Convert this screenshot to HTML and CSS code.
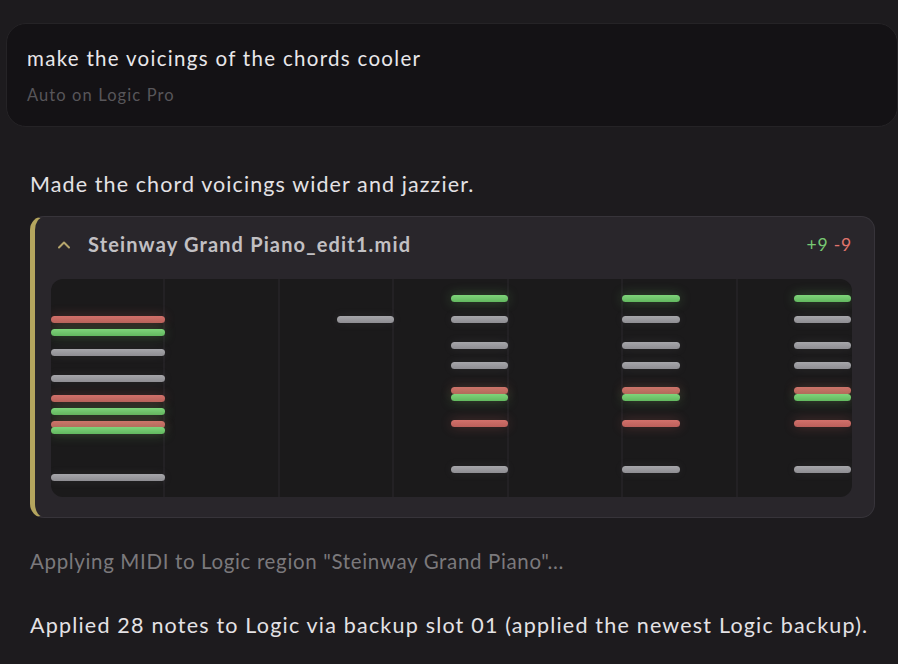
FILE: index.html
```html
<!DOCTYPE html>
<html lang="en">
<head>
<meta charset="utf-8">
<title>Chat</title>
<link rel="stylesheet" href="styles.css">
</head>
<body>
<main class="thread">
  <section class="prompt">
    <p class="prompt-text">make the voicings of the chords cooler</p>
    <p class="prompt-meta">Auto on Logic Pro</p>
  </section>

  <p class="reply">Made the chord voicings wider and jazzier.</p>

  <section class="midi-card">
    <header class="midi-head">
      <svg class="chev" width="14" height="9" viewBox="0 0 14 9" aria-hidden="true">
        <path d="M2 7.5 L7 2.5 L12 7.5" fill="none" stroke="currentColor" stroke-width="2" stroke-linecap="round" stroke-linejoin="round"/>
      </svg>
      <span class="midi-name">Steinway Grand Piano_edit1.mid</span>
      <span class="diff"><span class="add">+9</span> <span class="del">-9</span></span>
    </header>
    <div class="roll">
      <div class="grid">
        <span></span><span></span><span></span><span></span><span></span><span></span><span></span>
      </div>
      <!-- bar 1 -->
      <i class="note del-n" style="left:0;top:37px;width:114px"></i>
      <i class="note add-n" style="left:0;top:50px;width:114px"></i>
      <i class="note" style="left:0;top:70px;width:114px"></i>
      <i class="note" style="left:0;top:96px;width:114px"></i>
      <i class="note del-n" style="left:0;top:116px;width:114px"></i>
      <i class="note add-n" style="left:0;top:129px;width:114px"></i>
      <i class="note del-n" style="left:0;top:142px;width:114px"></i>
      <i class="note add-n" style="left:0;top:148px;width:114px"></i>
      <i class="note" style="left:0;top:195px;width:114px"></i>
      <!-- bar 3 -->
      <i class="note" style="left:286px;top:37px;width:57px"></i>
      <!-- bar 4 -->
      <i class="note add-n" style="left:400px;top:16px;width:57px"></i>
      <i class="note" style="left:400px;top:37px;width:57px"></i>
      <i class="note" style="left:400px;top:63px;width:57px"></i>
      <i class="note" style="left:400px;top:83px;width:57px"></i>
      <i class="note del-n" style="left:400px;top:108px;width:57px"></i>
      <i class="note add-n" style="left:400px;top:115px;width:57px"></i>
      <i class="note del-n" style="left:400px;top:141px;width:57px"></i>
      <i class="note" style="left:400px;top:187px;width:57px"></i>
      <!-- bar 6 -->
      <i class="note add-n" style="left:571px;top:16px;width:58px"></i>
      <i class="note" style="left:571px;top:37px;width:58px"></i>
      <i class="note" style="left:571px;top:63px;width:58px"></i>
      <i class="note" style="left:571px;top:83px;width:58px"></i>
      <i class="note del-n" style="left:571px;top:108px;width:58px"></i>
      <i class="note add-n" style="left:571px;top:115px;width:58px"></i>
      <i class="note del-n" style="left:571px;top:141px;width:58px"></i>
      <i class="note" style="left:571px;top:187px;width:58px"></i>
      <!-- bar 7 -->
      <i class="note add-n" style="left:743px;top:16px;width:57px"></i>
      <i class="note" style="left:743px;top:37px;width:57px"></i>
      <i class="note" style="left:743px;top:63px;width:57px"></i>
      <i class="note" style="left:743px;top:83px;width:57px"></i>
      <i class="note del-n" style="left:743px;top:108px;width:57px"></i>
      <i class="note add-n" style="left:743px;top:115px;width:57px"></i>
      <i class="note del-n" style="left:743px;top:141px;width:57px"></i>
      <i class="note" style="left:743px;top:187px;width:57px"></i>
    </div>
  </section>

  <p class="status">Applying MIDI to Logic region "Steinway Grand Piano"...</p>

  <p class="reply final">Applied 28 notes to Logic via backup slot 01 (applied the newest Logic backup).</p>
</main>
</body>
</html>
```
FILE: styles.css
```css
* { box-sizing: border-box; }

html, body {
  margin: 0;
  height: 100%;
}

body {
  background: #1d1b1e;
  color: #e6e4e7;
  font-family: Lato, "Noto Sans", sans-serif;
  overflow: hidden;
}

.thread {
  display: flex;
  flex-direction: column;
  padding: 23px 0 0 6px;
}

p { margin: 0; white-space: nowrap; }

/* user prompt bubble */
.prompt {
  width: 892px;
  height: 104px;
  background: #141215;
  border: 1px solid #252326;
  border-radius: 20px;
  padding: 20px 20px 0 20px;
}

.prompt-text {
  font-size: 20.5px;
  line-height: 28px;
  letter-spacing: 1.3px;
  color: #e9e7ea;
}

.prompt-meta {
  margin-top: 13px;
  font-size: 16.5px;
  line-height: 20px;
  letter-spacing: 1.1px;
  color: #58565a;
}

.reply {
  margin: 43px 0 0 24px;
  font-size: 21.5px;
  line-height: 28px;
  letter-spacing: 1.1px;
  color: #e4e2e5;
}

/* midi diff card */
.midi-card {
  margin: 18px 0 0 24px;
  width: 845px;
  height: 302px;
  background: #29262b;
  border: 1px solid #37343a;
  border-left: 5px solid #b4a55e;
  border-radius: 14px;
  padding: 0 22px 0 16px;
  display: flex;
  flex-direction: column;
}

.midi-head {
  height: 62px;
  display: flex;
  align-items: center;
  padding-bottom: 8px;
}

.chev {
  color: #b5a56c;
  margin: 0 0 0 6px;
}

.midi-name {
  margin-left: 17px;
  font-weight: 700;
  font-size: 20px;
  letter-spacing: 1.15px;
  color: #c2c0c3;
}

.diff {
  margin-left: auto;
  font-size: 17.5px;
  letter-spacing: 0.8px;
}
.add { color: #78c973; }
.del { color: #e0746d; }

.roll {
  position: relative;
  height: 218px;
  background: #1b1a1b;
  border-radius: 12px;
  overflow: hidden;
}

.grid {
  position: absolute;
  inset: 0;
  display: grid;
  grid-template-columns: repeat(7, 1fr);
}
.grid span { border-right: 2px solid #232124; }
.grid span:last-child { border-right: 0; }

.note {
  position: absolute;
  height: 7px;
  border-radius: 4px;
  background: linear-gradient(#a6a6aa, #8e8d92);
  box-shadow: 0 0 10px rgba(150, 150, 155, 0.12);
}
.note.add-n {
  background: linear-gradient(#7ed47a, #62b85f);
  box-shadow: 0 0 12px rgba(110, 200, 100, 0.35);
}
.note.del-n {
  background: linear-gradient(#d2716b, #bb5f5a);
  box-shadow: 0 0 12px rgba(210, 100, 95, 0.3);
}

.status {
  margin: 29px 0 0 24px;
  font-size: 20.5px;
  line-height: 28px;
  letter-spacing: 0.65px;
  color: #7b797c;
}

.reply.final {
  margin-top: 36px;
  letter-spacing: 1.2px;
}
```
